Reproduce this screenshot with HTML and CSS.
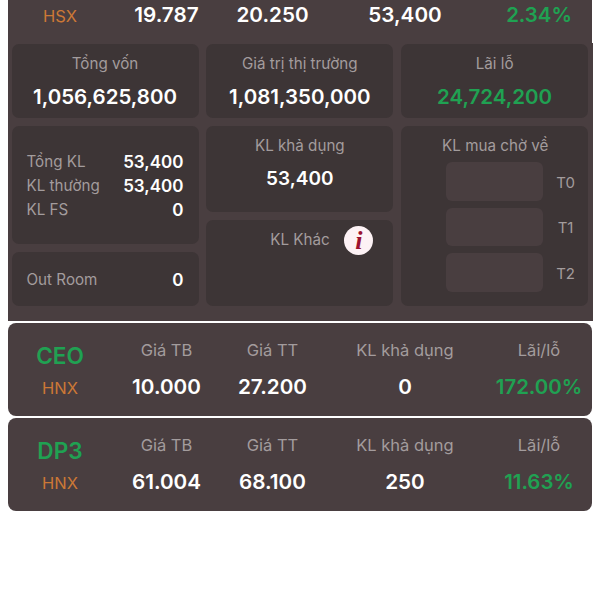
FILE: index.html
```html
<!DOCTYPE html>
<html lang="vi">
<head>
  <meta charset="UTF-8">
  <meta name="viewport" content="width=device-width, initial-scale=1.0">
  <title>Danh mục</title>
  <link rel="stylesheet" href="styles.css">
</head>
<body>

  <div class="portfolio">

    <div class="stock stock-open">
      <div class="cell"><span class="exchange">HSX</span></div>
      <div class="cell"><span class="value">19.787</span></div>
      <div class="cell"><span class="value">20.250</span></div>
      <div class="cell"><span class="value">53,400</span></div>
      <div class="cell"><span class="value gain">2.34%</span></div>
    </div>

    <div class="details">
      <div class="tile total">
        <span class="label">Tổng vốn</span>
        <span class="value">1,056,625,800</span>
      </div>
      <div class="tile total">
        <span class="label">Giá trị thị trường</span>
        <span class="value">1,081,350,000</span>
      </div>
      <div class="tile total">
        <span class="label">Lãi lỗ</span>
        <span class="value gain">24,724,200</span>
      </div>

      <div class="column">
        <div class="tile volumes">
          <div class="line"><span>Tổng KL</span><b>53,400</b></div>
          <div class="line"><span>KL thường</span><b>53,400</b></div>
          <div class="line"><span>KL FS</span><b>0</b></div>
        </div>
        <div class="tile out-room">
          <div class="line"><span>Out Room</span><b>0</b></div>
        </div>
      </div>

      <div class="column">
        <div class="tile available">
          <span class="label">KL khả dụng</span>
          <span class="value">53,400</span>
        </div>
        <div class="tile other">
          <span class="label">KL Khác</span>
          <span class="info">i</span>
        </div>
      </div>

      <div class="tile pending">
        <span class="label">KL mua chờ về</span>
        <div class="slot"><span class="box"></span><span class="day">T0</span></div>
        <div class="slot"><span class="box"></span><span class="day">T1</span></div>
        <div class="slot"><span class="box"></span><span class="day">T2</span></div>
      </div>
    </div>

    <div class="stock">
      <div class="cell name"><span class="symbol">CEO</span><span class="exchange">HNX</span></div>
      <div class="cell"><span class="label">Giá TB</span><span class="value">10.000</span></div>
      <div class="cell"><span class="label">Giá TT</span><span class="value">27.200</span></div>
      <div class="cell"><span class="label">KL khả dụng</span><span class="value">0</span></div>
      <div class="cell"><span class="label">Lãi/lỗ</span><span class="value gain">172.00%</span></div>
    </div>

    <div class="stock">
      <div class="cell name"><span class="symbol">DP3</span><span class="exchange">HNX</span></div>
      <div class="cell"><span class="label">Giá TB</span><span class="value">61.004</span></div>
      <div class="cell"><span class="label">Giá TT</span><span class="value">68.100</span></div>
      <div class="cell"><span class="label">KL khả dụng</span><span class="value">250</span></div>
      <div class="cell"><span class="label">Lãi/lỗ</span><span class="value gain">11.63%</span></div>
    </div>

  </div>

</body>
</html>
```

FILE: styles.css
```css
* {
  box-sizing: border-box;
}

body {
  margin: 0;
  background-color: #fff;
  font-family: Inter, "Liberation Sans", sans-serif;
  color: #a39c9d;
  white-space: nowrap;
}

.portfolio {
  width: 584px;
  margin: 0 auto;
}

.stock {
  display: grid;
  grid-template-columns: 104px 109px 103px 162px 106px;
  height: 93.5px;
  margin-bottom: 1.5px;
  padding-top: 15.5px;
  border-radius: 8px;
  background-color: #493e40;
}

.stock-open {
  height: 43px;
  margin-bottom: 0;
  padding-top: 3px;
  border-radius: 0;
}

.cell {
  display: flex;
  flex-direction: column;
  align-items: center;
  gap: 12.5px;
}

.label {
  font-size: 16.5px;
  line-height: 24px;
}

.value {
  font-size: 20.7px;
  line-height: 24px;
  font-weight: 600;
  color: #fff;
}

.gain {
  font-size: 20.4px;
  color: #20a152;
}

.name {
  padding-top: 6px;
  gap: 8px;
}

.symbol {
  font-size: 22.6px;
  line-height: 24px;
  font-weight: 600;
  color: #20a152;
}

.exchange {
  font-size: 16.5px;
  line-height: 24px;
  color: #cc7836;
}

.stock-open .exchange {
  padding-top: 1px;
}

.details {
  display: grid;
  grid-template-columns: repeat(3, 187px);
  grid-template-rows: 74px 180px;
  column-gap: 7.8px;
  row-gap: 8px;
  height: 278px;
  margin: 0 -0.5px 1.5px;
  padding: 1px 4px 0;
  background-color: #493e40;
}

.tile {
  border-radius: 7px;
  background-color: #3d3536;
}

.total,
.available {
  display: flex;
  flex-direction: column;
  align-items: center;
}

.details .label {
  font-size: 15.2px;
  line-height: 20px;
}

.total {
  padding-top: 10px;
  gap: 11px;
}

.total .value {
  font-size: 20.5px;
}

.column {
  display: flex;
  flex-direction: column;
  gap: 8px;
}

.line {
  display: flex;
  justify-content: space-between;
  font-size: 15.2px;
  line-height: 24px;
}

.line b {
  font-size: 17px;
  font-weight: 600;
  color: #fff;
}

.volumes {
  height: 118px;
  padding: 24px 15px 0;
}

.out-room {
  height: 54px;
  padding: 16px 15px 0;
}

.available {
  height: 86px;
  padding-top: 10px;
  gap: 11px;
}

.available .value {
  font-size: 19px;
}

.other {
  display: flex;
  align-items: flex-start;
  height: 86px;
  padding: 6px 0 0 64px;
  gap: 14.5px;
}

.other .label {
  padding-top: 4px;
}

.info {
  width: 29px;
  height: 29px;
  border-radius: 50%;
  background-color: #fdf2f5;
  color: #9c1230;
  font-family: "Liberation Serif", serif;
  font-size: 26px;
  font-style: italic;
  font-weight: bold;
  line-height: 29px;
  text-align: center;
}

.pending {
  display: flex;
  flex-direction: column;
  padding: 10px 13px 0 45px;
  gap: 7px;
}

.pending .label {
  margin: 0 0 -1px -4px;
}

.slot {
  display: flex;
  justify-content: space-between;
  align-items: center;
  height: 38.5px;
  font-size: 15px;
}

.box {
  width: 97px;
  height: 38.5px;
  border-radius: 6px;
  background-color: #493e40;
}

.day {
  width: 19px;
  padding-top: 2px;
  text-align: center;
}
```
